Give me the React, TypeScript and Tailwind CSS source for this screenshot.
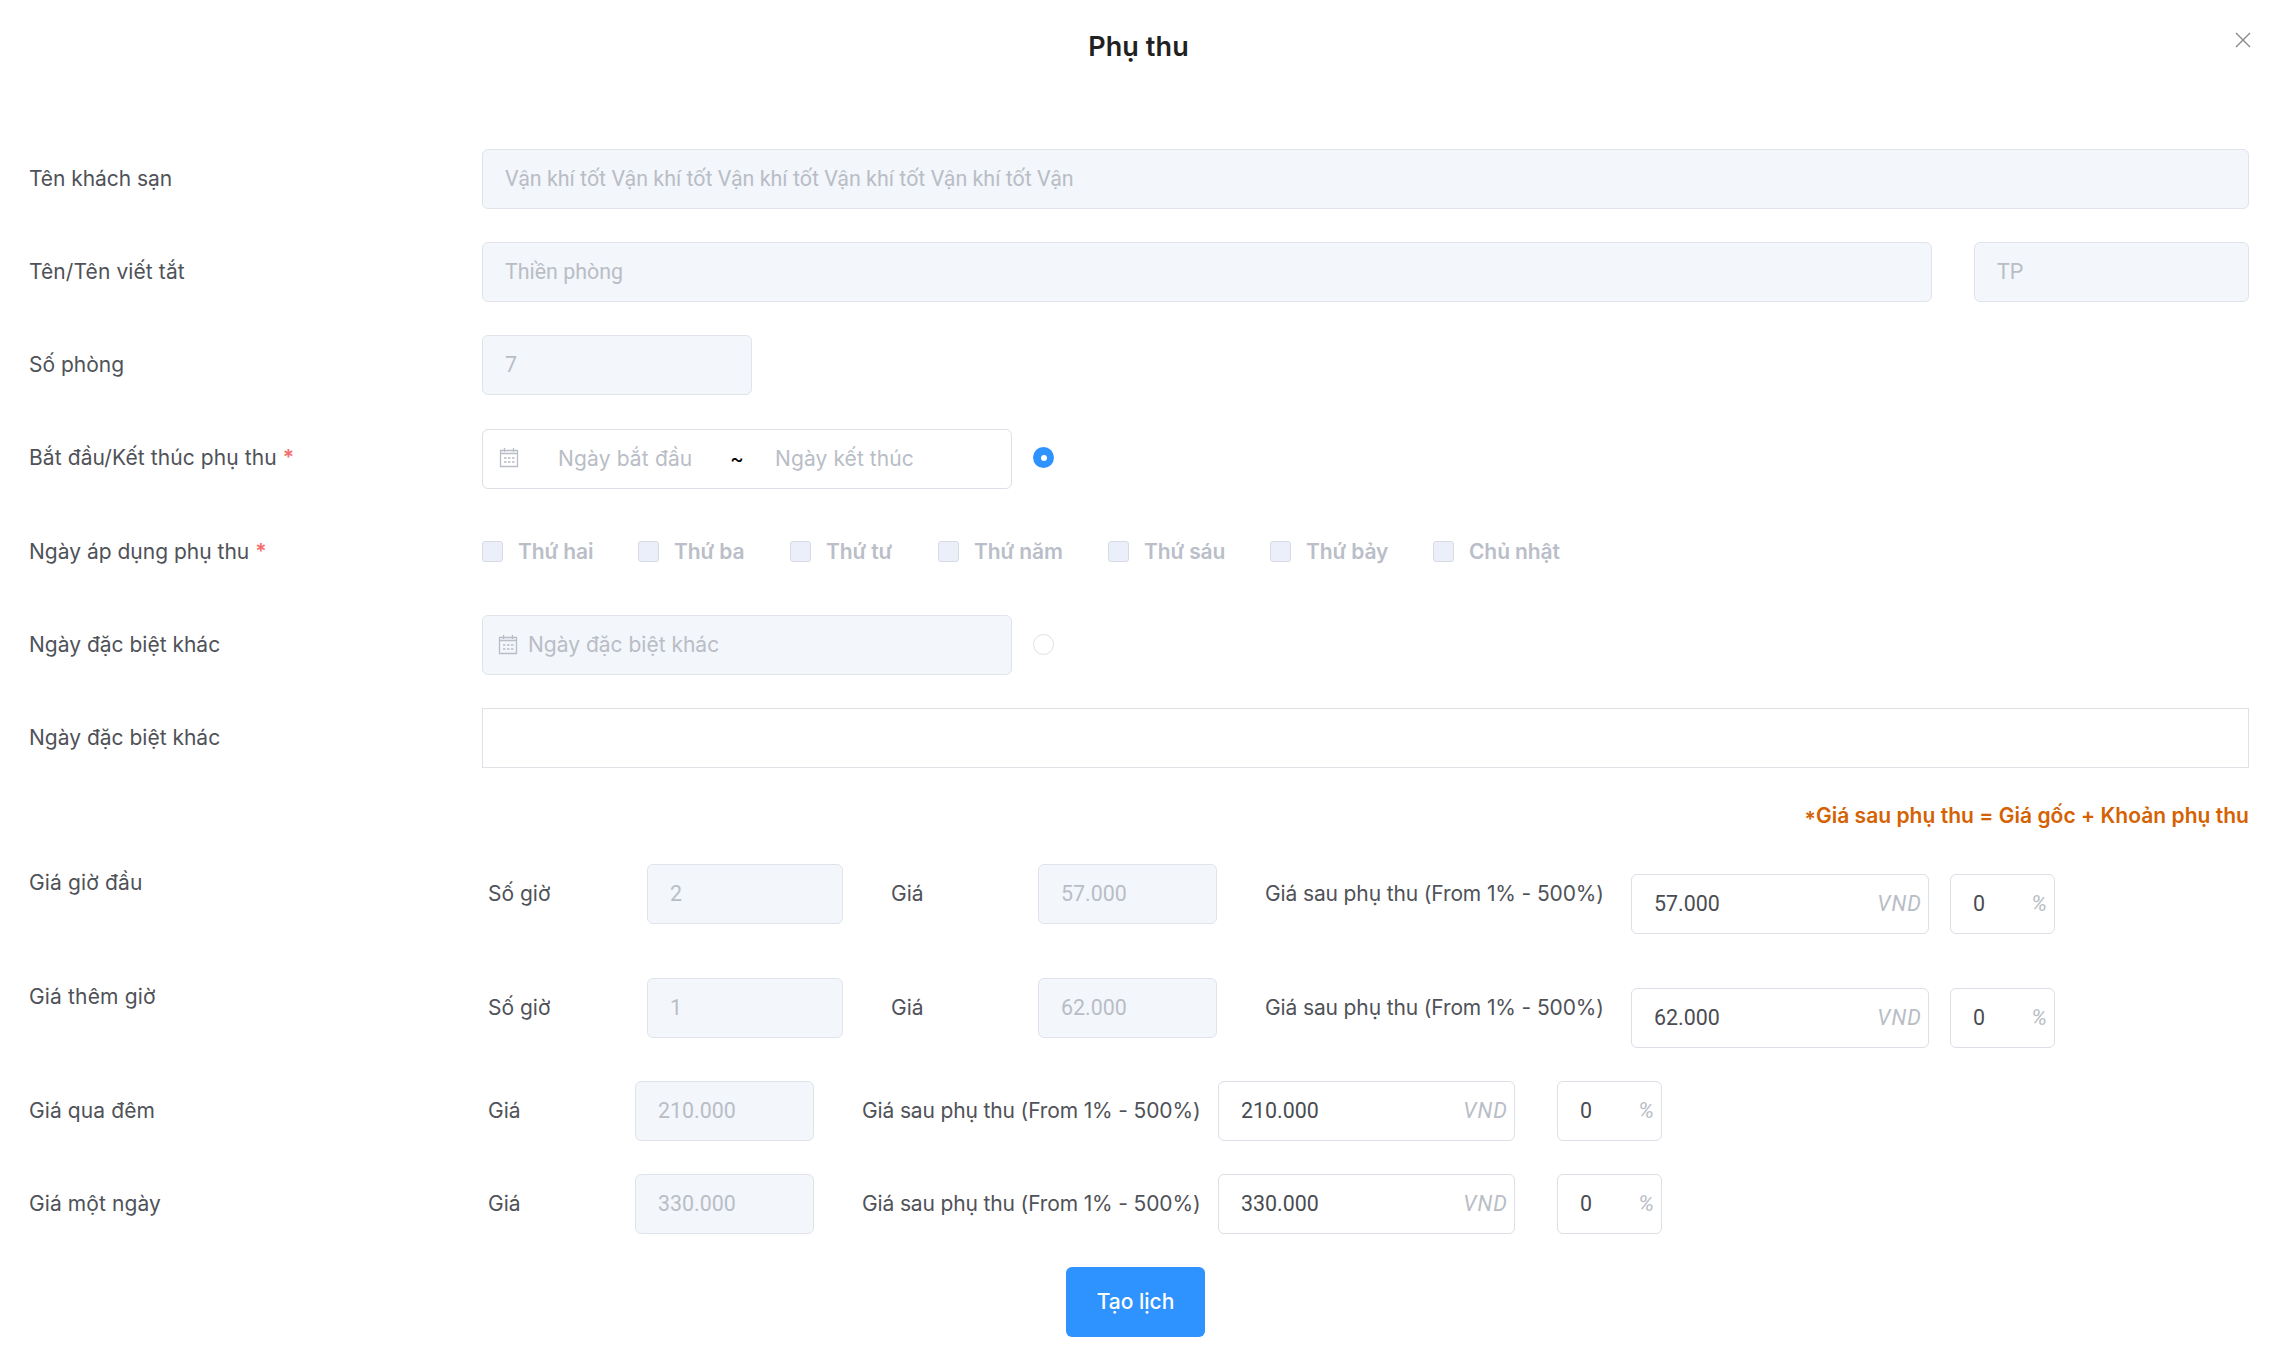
import type { ReactNode } from "react";

function CalendarIcon() {
  return (
    <svg className="h-[21px] w-[21px] shrink-0 text-[#b9bdc6]" viewBox="0 0 21 21" fill="none" stroke="currentColor" strokeWidth="1.3">
      <path d="M1.5 3.5h17v16h-17zM1.5 6.500h17M5.500 1v4M14.500 1v4" />
      <path d="M5 11h2.500M9 11h2.500M13 11h2.500M5 15h2.500M9 15h2.500M13 15h2.500" />
    </svg>
  );
}

function DisabledInput({ value, className }: { value: string; className: string }) {
  return (
    <div className={`flex h-[60px] items-center rounded-[6px] border border-[#e0e3ea] bg-[#f3f6fb] pl-[22px] font-[Roboto,sans-serif] text-[21.4px] text-[#b9bdc6] ${className}`}>
      {value}
    </div>
  );
}

function UnitInput({ value, unit, className }: { value: string; unit: "VND" | "%"; className: string }) {
  const unitStyle = unit === "%" ? "text-[22px]" : "tracking-[1px] -mr-px";
  return (
    <div className={`flex h-[60px] items-center justify-between rounded-[6px] border border-[#dcdfe6] bg-white pr-[7px] pl-[22px] font-[Roboto,sans-serif] text-[21.4px] ${className}`}>
      <span className="text-[#494c52]">{value}</span>
      <span className={`text-[#b9bdc6] italic ${unitStyle}`}>{unit}</span>
    </div>
  );
}

function Row({ label, required, className = "mb-[33px]", labelClass = "", children }: { label: string; required?: boolean; className?: string; labelClass?: string; children: ReactNode }) {
  return (
    <div className={`flex h-[60px] items-center ${className}`}>
      <div className={`w-[453px] shrink-0 ${labelClass}`}>
        {label}
        {required && <span className="ml-[6px] font-semibold text-[#f56c6c]">*</span>}
      </div>
      {children}
    </div>
  );
}

const days = [
  ["Thứ hai", "w-[156px]"],
  ["Thứ ba", "w-[152px]"],
  ["Thứ tư", "w-[148px]"],
  ["Thứ năm", "w-[170px]"],
  ["Thứ sáu", "w-[162px]"],
  ["Thứ bảy", "w-[163px]"],
  ["Chủ nhật", "w-[150px]"],
];

const AFTER = "Giá sau phụ thu (From 1% - 500%)";

function HourlyRow({ label, hours, price, className }: { label: string; hours: string; price: string; className: string }) {
  return (
    <Row label={label} className={className} labelClass="-mt-[22px] tracking-[0.15px]">
      <span className="w-[165px] pl-[6px]">Số giờ</span>
      <DisabledInput value={hours} className="w-[196px]" />
      <span className="ml-[48px] w-[147px]">Giá</span>
      <DisabledInput value={price} className="w-[179px]" />
      <span className="ml-[48px] w-[366px] tracking-[-0.13px]">{AFTER}</span>
      <div className="mt-[20px] flex gap-[21px]">
        <UnitInput value={price} unit="VND" className="w-[298px]" />
        <UnitInput value="0" unit="%" className="w-[105px]" />
      </div>
    </Row>
  );
}

function FlatRow({ label, price }: { label: string; price: string }) {
  return (
    <Row label={label} labelClass="tracking-[0.1px]">
      <span className="w-[153px] pl-[6px]">Giá</span>
      <DisabledInput value={price} className="w-[179px]" />
      <span className="ml-[48px] w-[356px] tracking-[-0.14px]">{AFTER}</span>
      <UnitInput value={price} unit="VND" className="w-[297px]" />
      <UnitInput value="0" unit="%" className="ml-[42px] w-[105px]" />
    </Row>
  );
}

export default function App() {
  return (
    <main className="h-[1363px] w-[2275px] overflow-hidden bg-white font-[Inter,sans-serif] text-[21px] leading-[30px] whitespace-nowrap text-[#4f5258]">
      <header className="relative flex h-[149px] justify-center pt-[32px] pl-[2px]">
        <h1 className="text-[27px] font-semibold tracking-[0.1px] text-[#1f2123]">Phụ thu</h1>
        <svg className="absolute top-[32px] right-[24px] size-4 text-[#85888d]" viewBox="0 0 16 16" fill="none" stroke="currentColor" strokeWidth="1.4">
          <path d="M1 1l14 14M15 1L1 15" />
        </svg>
      </header>

      <div className="pr-[26px] pl-[29px]">
        <Row label="Tên khách sạn" labelClass="tracking-[-0.05px]">
          <DisabledInput value="Vận khí tốt Vận khí tốt Vận khí tốt Vận khí tốt Vận khí tốt Vận" className="flex-1" />
        </Row>
        <Row label="Tên/Tên viết tắt" labelClass="tracking-[0.1px]">
          <DisabledInput value="Thiền phòng" className="flex-1" />
          <DisabledInput value="TP" className="ml-[42px] w-[275px]" />
        </Row>
        <Row label="Số phòng" className="mb-[34px]">
          <DisabledInput value="7" className="w-[270px]" />
        </Row>
        <Row label="Bắt đầu/Kết thúc phụ thu" required labelClass="-mt-[3px] tracking-[0.1px]">
          <div className="flex h-[60px] w-[530px] items-center rounded-[6px] border border-[#dcdfe6] pl-[16px] text-[#b9bdc6]">
            <div className="-mt-[3px]"><CalendarIcon /></div>
            <span className="ml-[38px] w-[172px] tracking-[0.15px]">Ngày bắt đầu</span>
            <span className="w-[45px] text-black">~</span>
            <span className="tracking-[0.1px]">Ngày kết thúc</span>
          </div>
          <span className="-mt-[3px] ml-[21px] flex size-[21px] items-center justify-center rounded-full bg-[#2f93ff]">
            <span className="size-[6px] rounded-full bg-white" />
          </span>
        </Row>
        <Row label="Ngày áp dụng phụ thu" required labelClass="-mt-px">
          {days.map(([d, w]) => (
            <div key={d} className={`-mt-px flex items-center gap-[15px] font-semibold tracking-[-0.1px] text-[#b9bec8] ${w}`}>
              <span className="size-[21px] rounded-[3px] border border-[#d8dbe4] bg-[#ebeffa]" />
              {d}
            </div>
          ))}
        </Row>
        <Row label="Ngày đặc biệt khác">
          <div className="flex h-[60px] w-[530px] items-center rounded-[6px] border border-[#e0e3ea] bg-[#f3f6fb] pl-[15px] text-[#b9bdc6]">
            <div className="-mt-[2px]"><CalendarIcon /></div>
            <span className="ml-[9px]">Ngày đặc biệt khác</span>
          </div>
          <span className="-mt-px ml-[21px] size-[21px] rounded-full border border-[#dcdfe6]" />
        </Row>
        <Row label="Ngày đặc biệt khác">
          <div className="h-[60px] flex-1 border border-[#e0e0e6]" />
        </Row>
        <p className="mb-[33px] flex h-[30px] items-center justify-end font-semibold tracking-[0.03px] text-[#d46203]">
          <span className="pt-[8px]">*</span>Giá sau phụ thu = Giá gốc + Khoản phụ thu
        </p>
        <HourlyRow label="Giá giờ đầu" hours="2" price="57.000" className="mb-[54px]" />
        <HourlyRow label="Giá thêm giờ" hours="1" price="62.000" className="mb-[43px]" />
        <FlatRow label="Giá qua đêm" price="210.000" />
        <FlatRow label="Giá một ngày" price="330.000" />
      </div>

      <button className="ml-[1066px] block h-[70px] w-[139px] rounded-[6px] bg-[#2f93ff] font-medium text-white">Tạo lịch</button>
    </main>
  );
}
